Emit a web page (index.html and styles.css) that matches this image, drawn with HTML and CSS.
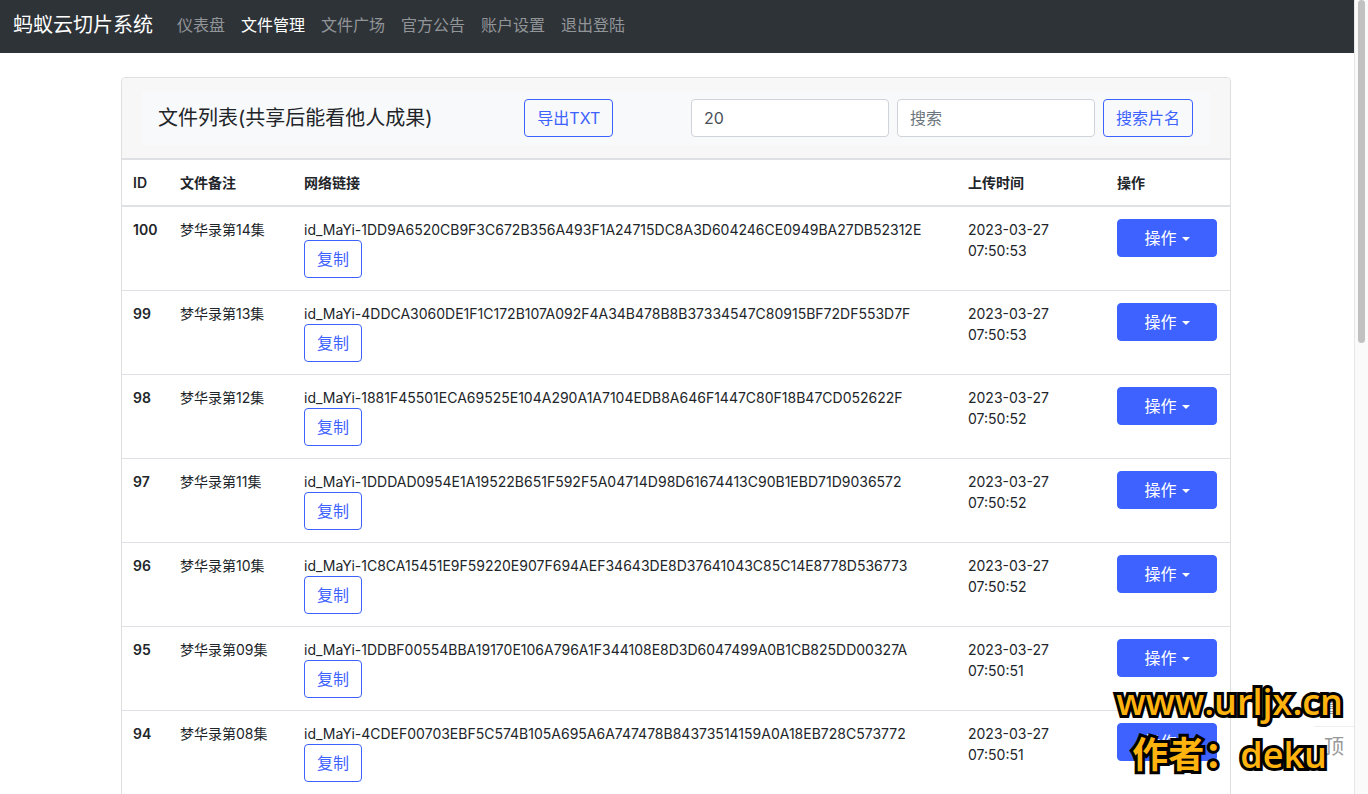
FILE: index.html
```html
<!DOCTYPE html>
<html lang="zh-CN">
<head>
<meta charset="utf-8">
<meta name="viewport" content="width=device-width, initial-scale=1">
<title>蚂蚁云切片系统</title>
<link rel="stylesheet" href="styles.css">
</head>
<body>
<div class="viewport">
  <div class="page">
    <nav class="topbar">
      <a class="brand" href="#">蚂蚁云切片系统</a>
      <a class="nav-link" href="#">仪表盘</a>
      <a class="nav-link active" href="#">文件管理</a>
      <a class="nav-link" href="#">文件广场</a>
      <a class="nav-link" href="#">官方公告</a>
      <a class="nav-link" href="#">账户设置</a>
      <a class="nav-link" href="#">退出登陆</a>
    </nav>
    <main class="container">
      <section class="card">
        <header class="card-header">
          <div class="toolbar">
            <a class="title" href="#">文件列表(共享后能看他人成果)</a>
            <button class="btn outline" type="button">导出TXT</button>
            <form class="search">
              <input class="field" type="text" value="20" aria-label="每页数量">
              <input class="field" type="search" placeholder="搜索" aria-label="搜索">
              <button class="btn outline" type="button">搜索片名</button>
            </form>
          </div>
        </header>
        <table class="files">
          <colgroup><col class="c-id"><col class="c-name"><col><col class="c-time"><col class="c-act"></colgroup>
          <thead>
            <tr><th scope="col">ID</th><th scope="col">文件备注</th><th scope="col">网络链接</th><th scope="col">上传时间</th><th scope="col">操作</th></tr>
          </thead>
          <tbody>
            <tr><th scope="row">100</th><td>梦华录第14集</td><td><div>id_MaYi-1DD9A6520CB9F3C672B356A493F1A24715DC8A3D604246CE0949BA27DB52312E</div><button class="btn outline" type="button">复制</button></td><td>2023-03-27 07:50:53</td><td><button class="btn primary" type="button">操作<span class="caret"></span></button></td></tr>
            <tr><th scope="row">99</th><td>梦华录第13集</td><td><div>id_MaYi-4DDCA3060DE1F1C172B107A092F4A34B478B8B37334547C80915BF72DF553D7F</div><button class="btn outline" type="button">复制</button></td><td>2023-03-27 07:50:53</td><td><button class="btn primary" type="button">操作<span class="caret"></span></button></td></tr>
            <tr><th scope="row">98</th><td>梦华录第12集</td><td><div>id_MaYi-1881F45501ECA69525E104A290A1A7104EDB8A646F1447C80F18B47CD052622F</div><button class="btn outline" type="button">复制</button></td><td>2023-03-27 07:50:52</td><td><button class="btn primary" type="button">操作<span class="caret"></span></button></td></tr>
            <tr><th scope="row">97</th><td>梦华录第11集</td><td><div>id_MaYi-1DDDAD0954E1A19522B651F592F5A04714D98D61674413C90B1EBD71D9036572</div><button class="btn outline" type="button">复制</button></td><td>2023-03-27 07:50:52</td><td><button class="btn primary" type="button">操作<span class="caret"></span></button></td></tr>
            <tr><th scope="row">96</th><td>梦华录第10集</td><td><div>id_MaYi-1C8CA15451E9F59220E907F694AEF34643DE8D37641043C85C14E8778D536773</div><button class="btn outline" type="button">复制</button></td><td>2023-03-27 07:50:52</td><td><button class="btn primary" type="button">操作<span class="caret"></span></button></td></tr>
            <tr><th scope="row">95</th><td>梦华录第09集</td><td><div>id_MaYi-1DDBF00554BBA19170E106A796A1F344108E8D3D6047499A0B1CB825DD00327A</div><button class="btn outline" type="button">复制</button></td><td>2023-03-27 07:50:51</td><td><button class="btn primary" type="button">操作<span class="caret"></span></button></td></tr>
            <tr><th scope="row">94</th><td>梦华录第08集</td><td><div>id_MaYi-4CDEF00703EBF5C574B105A695A6A747478B84373514159A0A18EB728C573772</div><button class="btn outline" type="button">复制</button></td><td>2023-03-27 07:50:51</td><td><button class="btn primary" type="button">操作<span class="caret"></span></button></td></tr>
          </tbody>
        </table>
      </section>
    </main>
    <div class="side">
      <a class="side-item" href="#">置</a>
      <a class="side-item" href="#">顶</a>
    </div>
  </div>
  <div class="scrollbar"><div class="thumb"></div></div>
</div>
<div class="watermark"><div>www.urljx.cn</div><div>作者：deku</div></div>
</body>
</html>
```
FILE: styles.css
```css
* { box-sizing: border-box; }
body {
  margin: 0;
  height: 100vh;
  overflow: hidden;
  background: #fff;
  color: #212529;
  font: 16px/24px Inter, "Noto Sans CJK SC", sans-serif;
}
a { color: inherit; text-decoration: none; }
button, input { font: inherit; }
.viewport { display: flex; height: 100vh; overflow: hidden; }
.page { flex: 1; min-width: 0; overflow: hidden; position: relative; }
.topbar {
  display: flex;
  align-items: center;
  gap: 16px;
  height: 53px;
  padding: 0 13px 4px;
  background: #2e3338;
  color: #929598;
}
.brand { margin-right: 8px; font-size: 20px; line-height: 30px; color: #fff; }
.nav-link.active { color: #fff; }
.container { max-width: 1140px; margin: 0 auto; padding: 24px 16px 0 14px; }
.card { border: 1px solid #dfdfdf; border-radius: 4px 4px 0 0; }
.card-header {
  padding: 13px 20px;
  background: #f7f7f7;
  border-bottom: 1px solid #dfdfdf;
  border-radius: 3px 3px 0 0;
}
.toolbar {
  display: flex;
  align-items: center;
  justify-content: space-between;
  padding: 8px 17px 8px 16px;
  background: #f8f9fa;
}
.title { margin-right: 14px; font-size: 20px; line-height: 30px; }
.search { display: flex; gap: 8px; }
.btn {
  height: 38px;
  padding: 6px 12px;
  border: 1px solid #3d62ff;
  border-radius: 4px;
  white-space: nowrap;
}
.outline { background: transparent; color: #3d62ff; }
.primary { width: 100px; background: #3d62ff; color: #fff; }
.caret {
  display: inline-block;
  margin-left: 5px;
  vertical-align: 3px;
  border: 4px solid transparent;
  border-top-color: #fff;
  border-bottom: 0;
}
.field {
  width: 198px;
  height: 38px;
  padding: 6px 12px;
  border: 1px solid #ced4da;
  border-radius: 4px;
  background: #fff;
  color: #495057;
}
.field::placeholder { color: #6c757d; opacity: 1; }
.files {
  width: 100%;
  table-layout: fixed;
  border-collapse: separate;
  border-spacing: 0;
  font-size: 14px;
  line-height: 21px;
}
.files th, .files td {
  padding: 12px 12px 12px 11px;
  border-top: 1px solid #dee2e6;
  text-align: left;
  vertical-align: top;
}
.files th { font-weight: 600; }
.files thead th { border-bottom: 2px solid #dee2e6; }
.files tbody tr:first-child > * { border-top: 0; }
.files .btn { display: block; font-size: 16px; line-height: 24px; }
.c-id { width: 47px; }
.c-name { width: 124px; }
.c-time { width: 149px; }
.c-act { width: 124px; }
.side { position: absolute; right: 0; bottom: 28px; width: 40px; color: #999; }
.side-item { display: block; height: 40px; line-height: 40px; text-align: center; font-size: 20px; }
.side-item + .side-item { border-top: 1px solid #eee; }
.scrollbar { width: 14px; padding: 0 3px; background: #fafafa; border-left: 1px solid #e6e6e6; }
.thumb { height: 43.2%; border-radius: 4px; background: #c1c1c1; }
.watermark {
  position: absolute;
  right: 25px;
  bottom: 13px;
  color: #ffb30f;
  font: 600 36px/53px "Open Sans", "Noto Sans CJK SC", sans-serif;
  text-align: center;
  -webkit-text-stroke: 6px #000;
  paint-order: stroke fill;
}
```
